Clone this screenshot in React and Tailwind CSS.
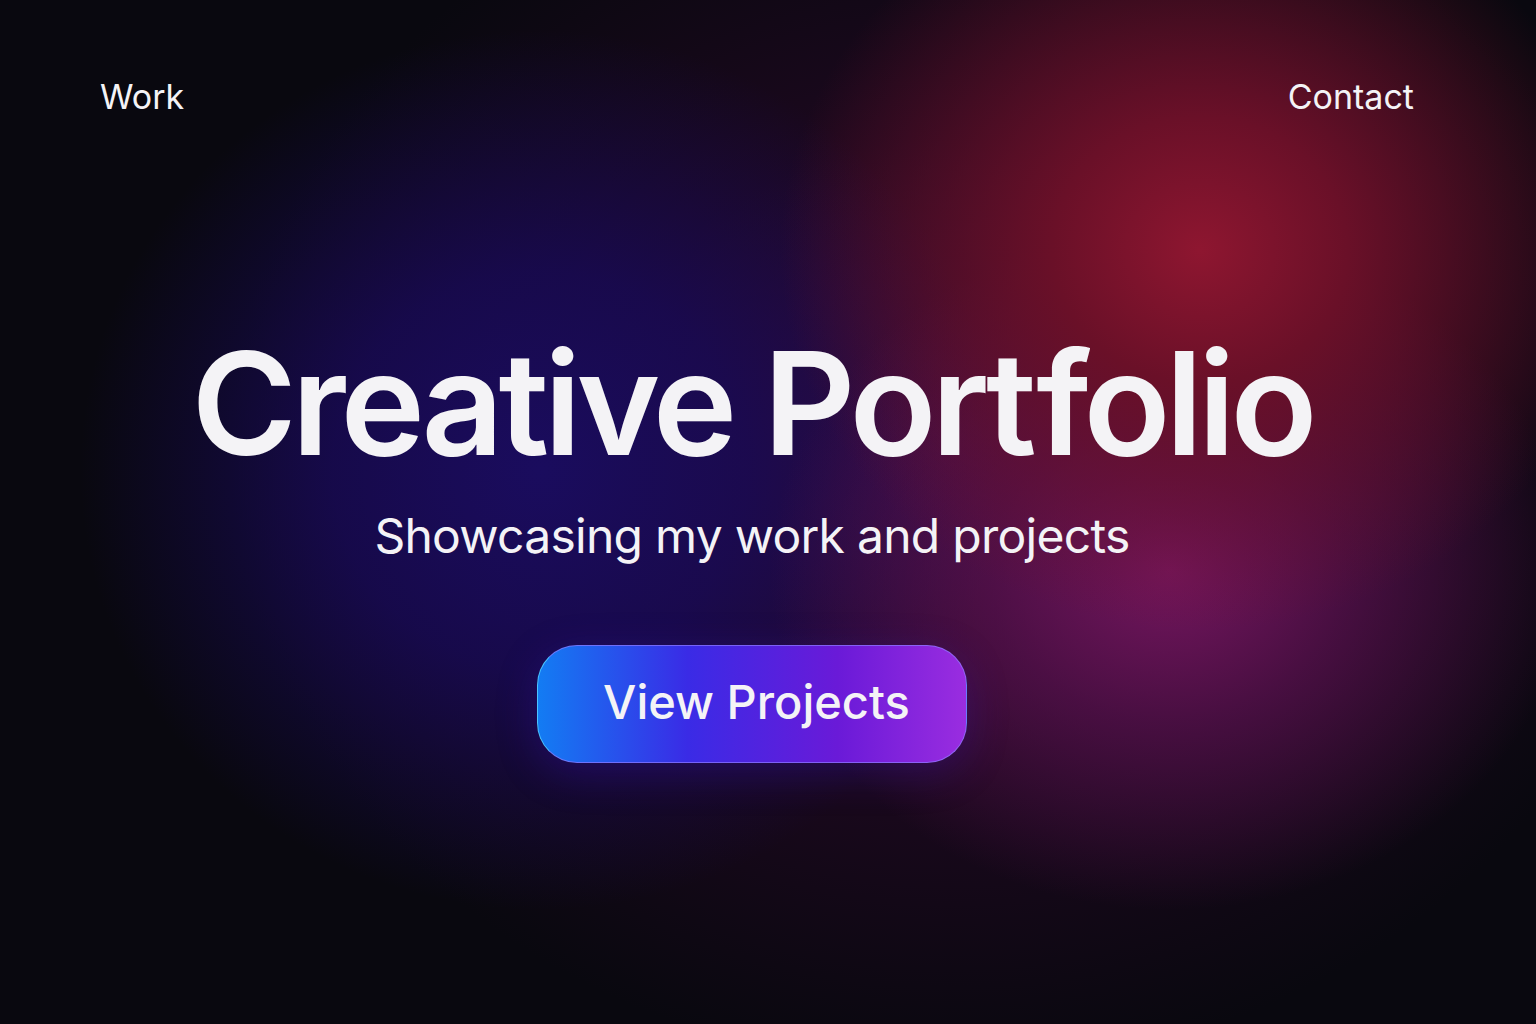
export default function App() {
  return (
    <div
      className="relative h-[1024px] w-full overflow-hidden bg-[#09080f] text-[#f4f3f6] [font-feature-settings:'liga'_0,'calt'_0]"
      style={{ fontFamily: "Inter, 'Noto Sans', sans-serif" }}
    >
      <div className="absolute inset-0 bg-[radial-gradient(ellipse_420px_380px_at_1200px_250px,#8e1630_0%,#6a1028_35%,rgba(60,8,30,0)_100%),radial-gradient(ellipse_400px_340px_at_1170px_570px,#74165e_0%,rgba(96,18,84,0.65)_45%,rgba(60,10,50,0)_100%),radial-gradient(ellipse_460px_440px_at_540px_470px,#1a0c5e_0%,rgba(24,10,88,0.8)_45%,rgba(20,8,60,0)_100%),radial-gradient(ellipse_720px_620px_at_950px_450px,#3a0c38_0%,rgba(40,8,40,0.6)_50%,rgba(10,8,16,0)_100%)]" />
      <div className="relative flex h-full flex-col">
        <nav className="flex items-center justify-between pl-[100px] pr-[122px] pt-[80px] text-[34px] font-normal leading-none">
          <a>Work</a>
          <a>Contact</a>
        </nav>
        <div className="flex flex-col items-center pr-8 pt-[217px]">
          <h1 className="text-[143px] font-semibold leading-none tracking-[-0.035em]">
            Creative Port<span className="ml-[5px]">f</span>olio
          </h1>
          <p className="mt-[38px] text-[48px] font-normal leading-none tracking-[-0.015em]">
            Showcasing my work and projects
          </p>
          <button className="mt-[85px] flex h-[118px] w-[430px] items-center justify-center rounded-[40px] border border-[#8f7dff]/70 border-l-[#4cc4ff] bg-[linear-gradient(90deg,#137cf3_0%,#3a2be6_35%,#6a1ad8_70%,#9a2de0_100%)] pb-[6px] pl-[9px] text-[47px] font-medium leading-none text-[#f4f3f6] shadow-[0_10px_40px_rgba(60,20,200,0.3)]">
            View Projects
          </button>
        </div>
      </div>
    </div>
  );
}
